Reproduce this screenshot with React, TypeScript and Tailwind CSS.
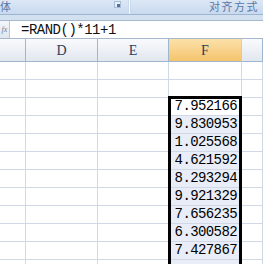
const values = [
  '7.952166',
  '9.830953',
  '1.025568',
  '4.621592',
  '8.293294',
  '9.921329',
  '7.656235',
  '6.300582',
  '7.427867',
  '',
];

const mono = { fontFamily: '"Liberation Mono", "DejaVu Sans Mono", monospace' };

export default function App() {
  return (
    <div className="w-[263px] h-[264px] overflow-hidden bg-white relative select-none">
      {/* Ribbon groups */}
      <div className="h-[15px] flex bg-gradient-to-b from-[#dde8f6] to-[#c8d9ef] border-b border-[#9fb4d0]">
        <div className="w-[128px] flex items-start justify-between overflow-hidden">
          <span className="text-[11px] leading-[13px] text-[#5a78a6] font-['Noto_Sans_CJK_SC',sans-serif]">
            体
          </span>
          <span className="mt-[1px] mr-[7px] w-[7px] h-[7px] bg-[#e9eff8] border border-[#a9bcd6] relative">
            <span className="absolute right-0 bottom-0 w-[3px] h-[3px] bg-[#5b7096]" />
          </span>
        </div>
        <div className="w-[3px] bg-gradient-to-r from-[#b7cbe4] via-[#f4f8fd] to-[#b7cbe4]" />
        <div className="flex-1 flex justify-end pr-[4px]">
          <span className="text-[11px] leading-[13px] tracking-[1.5px] text-[#5a78a6] font-['Noto_Sans_CJK_SC',sans-serif]">
            对齐方式
          </span>
        </div>
      </div>
      <div className="h-[5px] bg-[#d3e0ef]" />

      {/* Formula bar */}
      <div className="h-[19px] flex border-t border-b border-[#a7b7cc] bg-white">
        <div className="w-[10px] border-r border-[#b9c7d8] bg-gradient-to-b from-[#f3f6fa] to-[#dfe6ef] flex items-center justify-center">
          <span className="text-[8px] leading-none text-[#6b7b90] italic font-['Liberation_Serif',serif]">fx</span>
        </div>
        <div
          className="pl-[11px] text-[14px] leading-[18px] tracking-[-0.5px] text-[#111]"
          style={mono}
        >
          =RAND()*11+1
        </div>
      </div>

      {/* Sheet grid */}
      <div className="grid grid-cols-[26px_72px_71px_73px_1fr]">
        {['', 'D', 'E', 'F', ''].map((h, i) => (
          <div
            key={'h' + i}
            className={`h-[23px] border-r border-b border-[#9eb6ce] flex items-center justify-center text-[14px] text-[#2b3f5c] font-['Liberation_Serif',serif] ${
              h === 'F'
                ? 'bg-gradient-to-b from-[#fbe1a9] to-[#f5c46c] border-r-[#f2c87e]'
                : 'bg-gradient-to-b from-[#f9fafc] to-[#e2e7ef]'
            }`}
          >
            {h}
          </div>
        ))}
        {Array.from({ length: 12 }).map((_, r) => {
          const v = r >= 2 ? values[r - 2] : undefined;
          return [0, 1, 2, 3, 4].map(c => (
            <div
              key={r + '-' + c}
              className={`h-[18px] border-r border-b border-[#d0d7e5] ${
                c === 3 && r > 2 ? 'bg-[#e9edf7]' : 'bg-white'
              }`}
            >
              {c === 3 && v ? (
                <div
                  className="h-full flex items-end justify-end pr-[4px] text-[14px] leading-[17px] tracking-[-0.6px] text-black"
                  style={mono}
                >
                  {v}
                </div>
              ) : null}
            </div>
          ));
        })}
      </div>

      {/* Selection outline */}
      <div className="absolute left-[168px] top-[96px] w-[74px] h-[200px] border-[3px] border-black pointer-events-none" />
    </div>
  );
}
